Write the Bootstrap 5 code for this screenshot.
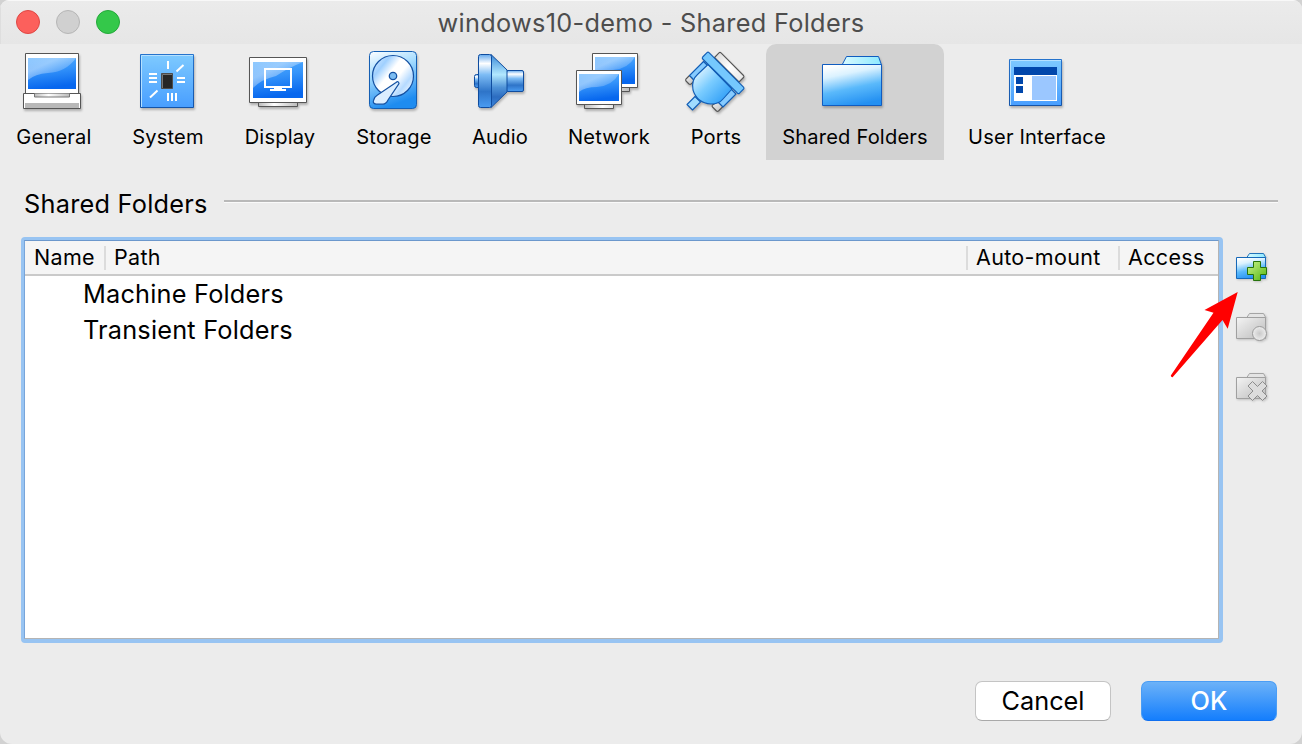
<!DOCTYPE html>
<html lang="en">
<head>
<meta charset="utf-8">
<title>windows10-demo - Shared Folders</title>
<link href="https://cdn.jsdelivr.net/npm/bootstrap@5.3.0/dist/css/bootstrap.min.css" rel="stylesheet">
<style>
body{width:1302px;height:744px;overflow:hidden;background:#d2d2d2;font-family:Inter,"Liberation Sans",sans-serif;color:#000}
.win{width:1302px;height:744px;background:#ececec;border-radius:9px 9px 12px 12px;overflow:hidden}
.titlebar{height:44px;background:linear-gradient(#ebebeb,#e6e6e6);border-top:1px solid #f8f8f8;box-shadow:inset 1px 0 #dedede;font-size:25.3px;letter-spacing:.3px;color:#4d4d4d}
.lights{gap:16px;left:16px;top:9px}
.light{width:24px;height:24px;border-radius:50%;border:1px solid}
.light-close{background:#fc605c;border-color:#df4744}
.light-min{background:#d0d0d0;border-color:#b6b6b6}
.light-zoom{background:#34c84a;border-color:#24a93a}
.tools{display:grid;grid-template-columns:108px 104px 104px 108px 88px 114px 84px 178px 170px;column-gap:8px;height:116px}
.tool{padding-top:4px;font-size:20.1px;line-height:30px;letter-spacing:.18px;white-space:nowrap}
.tool svg{width:64px;height:64px;overflow:visible;filter:drop-shadow(1px 2px 1px rgba(0,0,0,.25))}
.tool span{margin-top:10px}
.tool.active{background:#d2d2d2;border-radius:10px 10px 0 0}
.section-title{height:86px;padding:0 24px;font-size:25.3px;letter-spacing:.25px}
.section-title span{padding-top:2px}
.rule{height:3px;margin:-4px 0 0 16px;background:linear-gradient(#b9b9b9 66%,#fafafa 66%)}
.main-area{padding-left:21px;height:406px;margin-top:-9px}
.list-frame{width:1202px;height:406px;background:#fff;border:solid #98c4f2;border-width:3px 4px 4px 3px;border-radius:4px}
.list-inner{border:1px solid #b4b4b4;border-top-color:#6c98cc;border-left-color:#78a5da;height:100%}
.cols{height:35px;background:#f5f5f5;border-bottom:2px solid #cacaca;font-size:21.5px;letter-spacing:.33px;line-height:32px;display:grid;grid-template-columns:80px 862px 152px 1fr}
.cols div{padding-left:9px;position:relative;white-space:nowrap}
.cols div+div::before{content:"";position:absolute;left:-1px;top:5px;width:2px;height:24px;background:#dcdcdc}
.entry{height:36px;line-height:36px;padding-left:58px;font-size:25.3px;letter-spacing:.2px;white-space:nowrap}
.side{width:32px;margin-left:13px;padding-top:14px;gap:28px}
.side svg{width:32px;height:32px;overflow:visible;filter:drop-shadow(1px 1px 1px rgba(0,0,0,.18))}
.footer-row{padding:38px 25px 0 0;gap:30px}
.push{width:136px;height:40px;border-radius:7px;padding:0;font-size:25.3px;line-height:38px}
.push-cancel,.push-cancel:hover{background:#fff;border:1px solid #c4c4c4;border-bottom-color:#a9a9a9;color:#000}
.push-ok,.push-ok:hover{background:linear-gradient(#6cb2f8,#147efd);border:1px solid #4a9df5;border-bottom-color:#0f6ff0;color:#fff;font-weight:500}
.arrow{left:1165px;top:285px;width:80px;height:100px}
</style>
<script src="https://cdn.jsdelivr.net/npm/bootstrap@5.3.0/dist/js/bootstrap.bundle.min.js"></script>
</head>
<body>
<svg width="0" height="0" class="position-absolute">
<defs>
<linearGradient id="scr" x1="0" y1="0" x2=".2" y2="1"><stop offset="0" stop-color="#52acff"/><stop offset=".45" stop-color="#3594fa"/><stop offset="1" stop-color="#0767ee"/></linearGradient>
<linearGradient id="gloss" x1="0" y1="0" x2=".8" y2=".8"><stop offset="0" stop-color="#fff" stop-opacity=".35"/><stop offset=".4" stop-color="#fff" stop-opacity=".45"/><stop offset="1" stop-color="#fff" stop-opacity=".08"/></linearGradient>
<linearGradient id="tile" x1="0" y1="0" x2="0" y2="1"><stop offset="0" stop-color="#7ecaff"/><stop offset="1" stop-color="#489eff"/></linearGradient>
<linearGradient id="edge" x1="0" y1="0" x2="0" y2="1"><stop offset="0" stop-color="#2673cc"/><stop offset="1" stop-color="#1454a8"/></linearGradient>
<linearGradient id="stand"><stop offset="0" stop-color="#bbb"/><stop offset=".4" stop-color="#fff"/><stop offset="1" stop-color="#bbb"/></linearGradient>
<linearGradient id="hdd" x1="0" y1="0" x2=".3" y2="1"><stop offset="0" stop-color="#fff"/><stop offset=".4" stop-color="#a5dcff"/><stop offset="1" stop-color="#1e8cf0"/></linearGradient>
<linearGradient id="plate" x1="0" y1=".1" x2="1" y2=".9"><stop offset="0" stop-color="#d5eaff"/><stop offset=".22" stop-color="#9fd0ff"/><stop offset=".42" stop-color="#fff"/><stop offset=".58" stop-color="#fff"/><stop offset=".78" stop-color="#b5daff"/><stop offset="1" stop-color="#fff"/></linearGradient>
<linearGradient id="horn" x1="0" y1="0" x2="0" y2="1"><stop offset="0" stop-color="#63a9ee"/><stop offset=".17" stop-color="#fff"/><stop offset=".38" stop-color="#7dbcf5"/><stop offset=".7" stop-color="#2e74c8"/><stop offset="1" stop-color="#4a9cf2"/></linearGradient>
<linearGradient id="cone" x1="0" y1="0" x2="0" y2="1"><stop offset="0" stop-color="#3b8ad8"/><stop offset=".38" stop-color="#b2e8ff"/><stop offset=".62" stop-color="#4f93d8"/><stop offset=".8" stop-color="#2c6cc0"/><stop offset="1" stop-color="#3b87dd"/></linearGradient>
<linearGradient id="plug" x1=".1" y1=".1" x2=".9" y2=".9"><stop offset="0" stop-color="#e8f8ff"/><stop offset=".45" stop-color="#7accff"/><stop offset="1" stop-color="#2c9cf6"/></linearGradient>
<linearGradient id="fold" x1=".25" y1="0" x2=".55" y2="1"><stop offset="0" stop-color="#fff"/><stop offset=".25" stop-color="#dbf2ff"/><stop offset=".6" stop-color="#5ab9fb"/><stop offset="1" stop-color="#2390f2"/></linearGradient>
<linearGradient id="tab" x1="0" y1="0" x2="1" y2="0"><stop offset="0" stop-color="#d9faff"/><stop offset="1" stop-color="#8ce9ff"/></linearGradient>
<linearGradient id="gray" x1="0" y1="0" x2="1" y2="1"><stop offset="0" stop-color="#f4f4f4"/><stop offset="1" stop-color="#bbb"/></linearGradient>
<linearGradient id="white" x1="0" y1="0" x2="1" y2="1"><stop offset="0" stop-color="#d8d8d8"/><stop offset=".5" stop-color="#fff"/><stop offset="1" stop-color="#e4e4e4"/></linearGradient>
<linearGradient id="green" x1="0" y1="0" x2="1" y2="1"><stop offset="0" stop-color="#ccf58c"/><stop offset="1" stop-color="#52b510"/></linearGradient>
<radialGradient id="dot"><stop offset="0" stop-color="#c9c9c9"/><stop offset="1" stop-color="#ededed"/></radialGradient>
</defs>
</svg>
<div class="win d-flex flex-column">
  <header class="titlebar position-relative d-flex align-items-center justify-content-center flex-shrink-0">
    <div class="lights d-flex position-absolute"><i class="light light-close"></i><i class="light light-min"></i><i class="light light-zoom"></i></div>
    <span>windows10-demo - Shared Folders</span>
  </header>
  <nav class="tools flex-shrink-0">
    <div class="tool d-flex flex-column align-items-center">
      <svg viewBox="22 48 64 64"><path d="M25.500 53.500h53v40h-53z" fill="#fff" stroke="#555"/><path d="M28 58h48v31H28z" fill="url(#scr)"/><path d="M28 58h48Q66 72 48 73 35 74 28 80z" fill="url(#gloss)"/><path d="M23.500 93.500h57v15h-57z" fill="#fff" stroke="#555"/><path d="M25 103h54v5H25z" fill="#b8b8b8"/><path d="M34.500 93.500v3.500h35v-3.500" fill="url(#stand)" stroke="#777"/></svg>
      <span>General</span></div>
    <div class="tool d-flex flex-column align-items-center">
      <svg viewBox="136 48 64 64"><path d="M140.500 54.500h53v53h-53z" fill="url(#tile)" stroke="url(#edge)"/><path d="M141.500 107v-51.500H193" fill="none" stroke="#b5e1ff"/><path d="M168 61v8M176.500 71.500l7-6.500M149 74h8M149 78h8M149 82h8M177 78h8M177 82h8M150 97.500l7.500-7M168 93v8M172 93v8M176 93v8" stroke="#fff" stroke-width="2"/><path d="M161.500 73.500h11v15h-11z" fill="#262626" stroke="#4d4d4d"/><path d="M162.500 88v-13.500h9.500" fill="none" stroke="#777"/></svg>
      <span>System</span></div>
    <div class="tool d-flex flex-column align-items-center">
      <svg viewBox="248 48 64 64"><path d="M258.500 102.500h39v4h-39z" fill="url(#stand)" stroke="#555"/><path d="M249.500 57.500h57v45h-57z" fill="#fff" stroke="#555"/><path d="M253 62h50v36h-50z" fill="url(#scr)"/><path d="M253 62h50Q288 68 276 76 262 79 253 88z" fill="url(#gloss)"/><path d="M265 69h26v18h-26z" fill="none" stroke="#fff" stroke-width="2"/><path d="M274 88h8v1h4v2h-16v-2h4z" fill="#fff"/></svg>
      <span>Display</span></div>
    <div class="tool d-flex flex-column align-items-center">
      <svg viewBox="362 48 64 64"><rect x="369.500" y="51.500" width="47" height="57" rx="4" fill="url(#hdd)" stroke="#145fb4"/><circle cx="393" cy="76" r="20.500" fill="url(#plate)" stroke="#1551a2" stroke-width="1.200"/><circle cx="393" cy="76" r="3.700" fill="#7dbdf2" stroke="#1551a2" stroke-width="1.300"/><path d="M396 82.500q2.500-2 3 1L388 100q-2 4-5 4.200h-7q-3.500-.7-2.500-3.700 1-4 4-5.500z" fill="#dceeff" stroke="#1551a2" stroke-width="1.200"/></svg>
      <span>Storage</span></div>
    <div class="tool d-flex flex-column align-items-center">
      <svg viewBox="468 48 64 64"><g stroke="#0f4c9f"><rect x="474.500" y="74.500" width="6" height="13" rx="2" fill="url(#horn)"/><rect x="506.500" y="70.500" width="17" height="21" rx="1.500" fill="url(#horn)"/><path d="M491 54.500l16 15.500v22l-16 15.500z" fill="url(#cone)"/><rect x="478.500" y="54.500" width="13" height="53" rx="2" fill="url(#horn)"/></g></svg>
      <span>Audio</span></div>
    <div class="tool d-flex flex-column align-items-center">
      <svg viewBox="577 48 64 64"><path d="M584.500 104.500h29v4h-29zM600.500 87.500h29v4h-29z" fill="url(#stand)" stroke="#555"/><path d="M592.500 53.500h45v34h-45z" fill="#fff" stroke="#555"/><path d="M595 57h40v27h-40z" fill="url(#scr)"/><path d="M595 57h40Q628 69 613 70 601 70 595 75z" fill="url(#gloss)"/><path d="M576.500 70.500h45v34h-45z" fill="#fff" stroke="#555"/><path d="M579 74h40v27h-40z" fill="url(#scr)"/><path d="M579 74h40Q612 86 597 87 585 87 579 92z" fill="url(#gloss)"/></svg>
      <span>Network</span></div>
    <div class="tool d-flex flex-column align-items-center">
      <svg viewBox="684 48 64 64"><g stroke-linejoin="round" stroke="#105cb5" stroke-width="1.100"><path d="M714.500 57.500l4.500-4.700q1-1 2 0L743.500 75.500q.8 1 0 2l-4.500 4.500z" fill="url(#white)" stroke="#555"/><path d="M695 96.500l5.500 5.500-8 8-5.500-5.500z" fill="#9fdbff"/><path d="M689.500 75.500l5 5.500-3.500 3q-1 .7-2 0l-3-3q-.7-1 0-2z" fill="url(#gray)" stroke="#555"/><path d="M703.500 61.500l6 6-14 14-6-6z" fill="#86cbff"/><path d="M718 101.500l5 5-4.500 4.500q-1 .7-2 0l-4-4q-.7-1 0-2z" fill="url(#gray)" stroke="#555"/><path d="M730.500 88.500l5.500 5.500-13 13-5.500-5.500z" fill="#86cbff"/><path d="M708 64.500l-10 9.500Q691 80 693 90q4 13 18 14 8 0 12-5l9-10z" fill="url(#plug)"/><path d="M707 52.700q1-1 2 0l34.500 34.500q.8 1 0 2l-4 4q-1 .8-2 0L702.700 59q-.8-1 0-2z" fill="#75c8fd"/></g></svg>
      <span>Ports</span></div>
    <div class="tool active d-flex flex-column align-items-center">
      <svg viewBox="823 48 64 64"><path d="M842 65l4.500-8.500h32l3 8.500z" fill="url(#tab)" stroke="#105cc0"/><path d="M822.500 64.500h59v41h-59z" fill="url(#fold)" stroke="#105cc0"/></svg>
      <span>Shared Folders</span></div>
    <div class="tool d-flex flex-column align-items-center">
      <svg viewBox="1005 48 64 64"><path d="M1009.500 59.500h52v46h-52z" fill="url(#tile)" stroke="url(#edge)"/><path d="M1010.500 105v-44.500H1061" fill="none" stroke="#b5e1ff"/><path d="M1014 67h43v34h-43z" fill="#fff"/><path d="M1014 67h43v8h-43zM1016 77h7v7h-7zM1016 86h7v7h-7z" fill="#0147ab"/><path d="M1032 76h24v24h-24z" fill="#9bc7ff"/></svg>
      <span>User Interface</span></div>
  </nav>
  <div class="section-title d-flex align-items-center flex-shrink-0"><span>Shared Folders</span><div class="rule flex-grow-1"></div></div>
  <main class="main-area d-flex flex-shrink-0">
    <div class="list-frame"><div class="list-inner">
      <div class="cols"><div>Name</div><div>Path</div><div>Auto-mount</div><div>Access</div></div>
      <div class="entry">Machine Folders</div>
      <div class="entry">Transient Folders</div>
    </div></div>
    <div class="side d-flex flex-column">
      <svg viewBox="1236 251 32 32"><path d="M1246.500 258l3-4.500h14l2.500 4.500z" fill="url(#tab)" stroke="#2273b8"/><path d="M1236.500 257.500h29v21h-29z" fill="url(#fold)" stroke="#1668b8"/><path d="M1253.500 261.500h7v6h6v7h-6v6h-7v-6h-6v-7h6z" fill="url(#green)" stroke="#26730c"/></svg>
      <svg viewBox="1236 251 32 32"><path d="M1246.500 258l3-4.500h14l2.500 4.500z" fill="#e4e4e4" stroke="#a5a5a5"/><path d="M1236.500 257.500h29v21h-29z" fill="url(#gray)" stroke="#a0a0a0"/><circle cx="1259.500" cy="273.500" r="7" fill="url(#dot)" stroke="#999"/></svg>
      <svg viewBox="1236 251 32 32"><path d="M1246.500 258l3-4.500h14l2.500 4.500z" fill="#e4e4e4" stroke="#a5a5a5"/><path d="M1236.500 257.500h29v21h-29z" fill="url(#gray)" stroke="#a0a0a0"/><path d="M1252.500 261.500l5 5 5-5 4.500 4.500-5 5 5 5-4.500 4.500-5-5-5 5-4.500-4.500 5-5-5-5z" fill="#dcdcdc" stroke="#8c8c8c"/></svg>
    </div>
  </main>
  <footer class="footer-row d-flex justify-content-end"><button class="btn push push-cancel">Cancel</button><button class="btn push push-ok">OK</button></footer>
</div>
<svg class="arrow position-absolute" viewBox="1165 285 80 100"><path d="M1237.700 292l-33.200 18 9 2.700-42.700 62.800q.4 2.200 2 1.500l49.700-57 5.200 8.700z" fill="#f00"/></svg>
</body>
</html>
